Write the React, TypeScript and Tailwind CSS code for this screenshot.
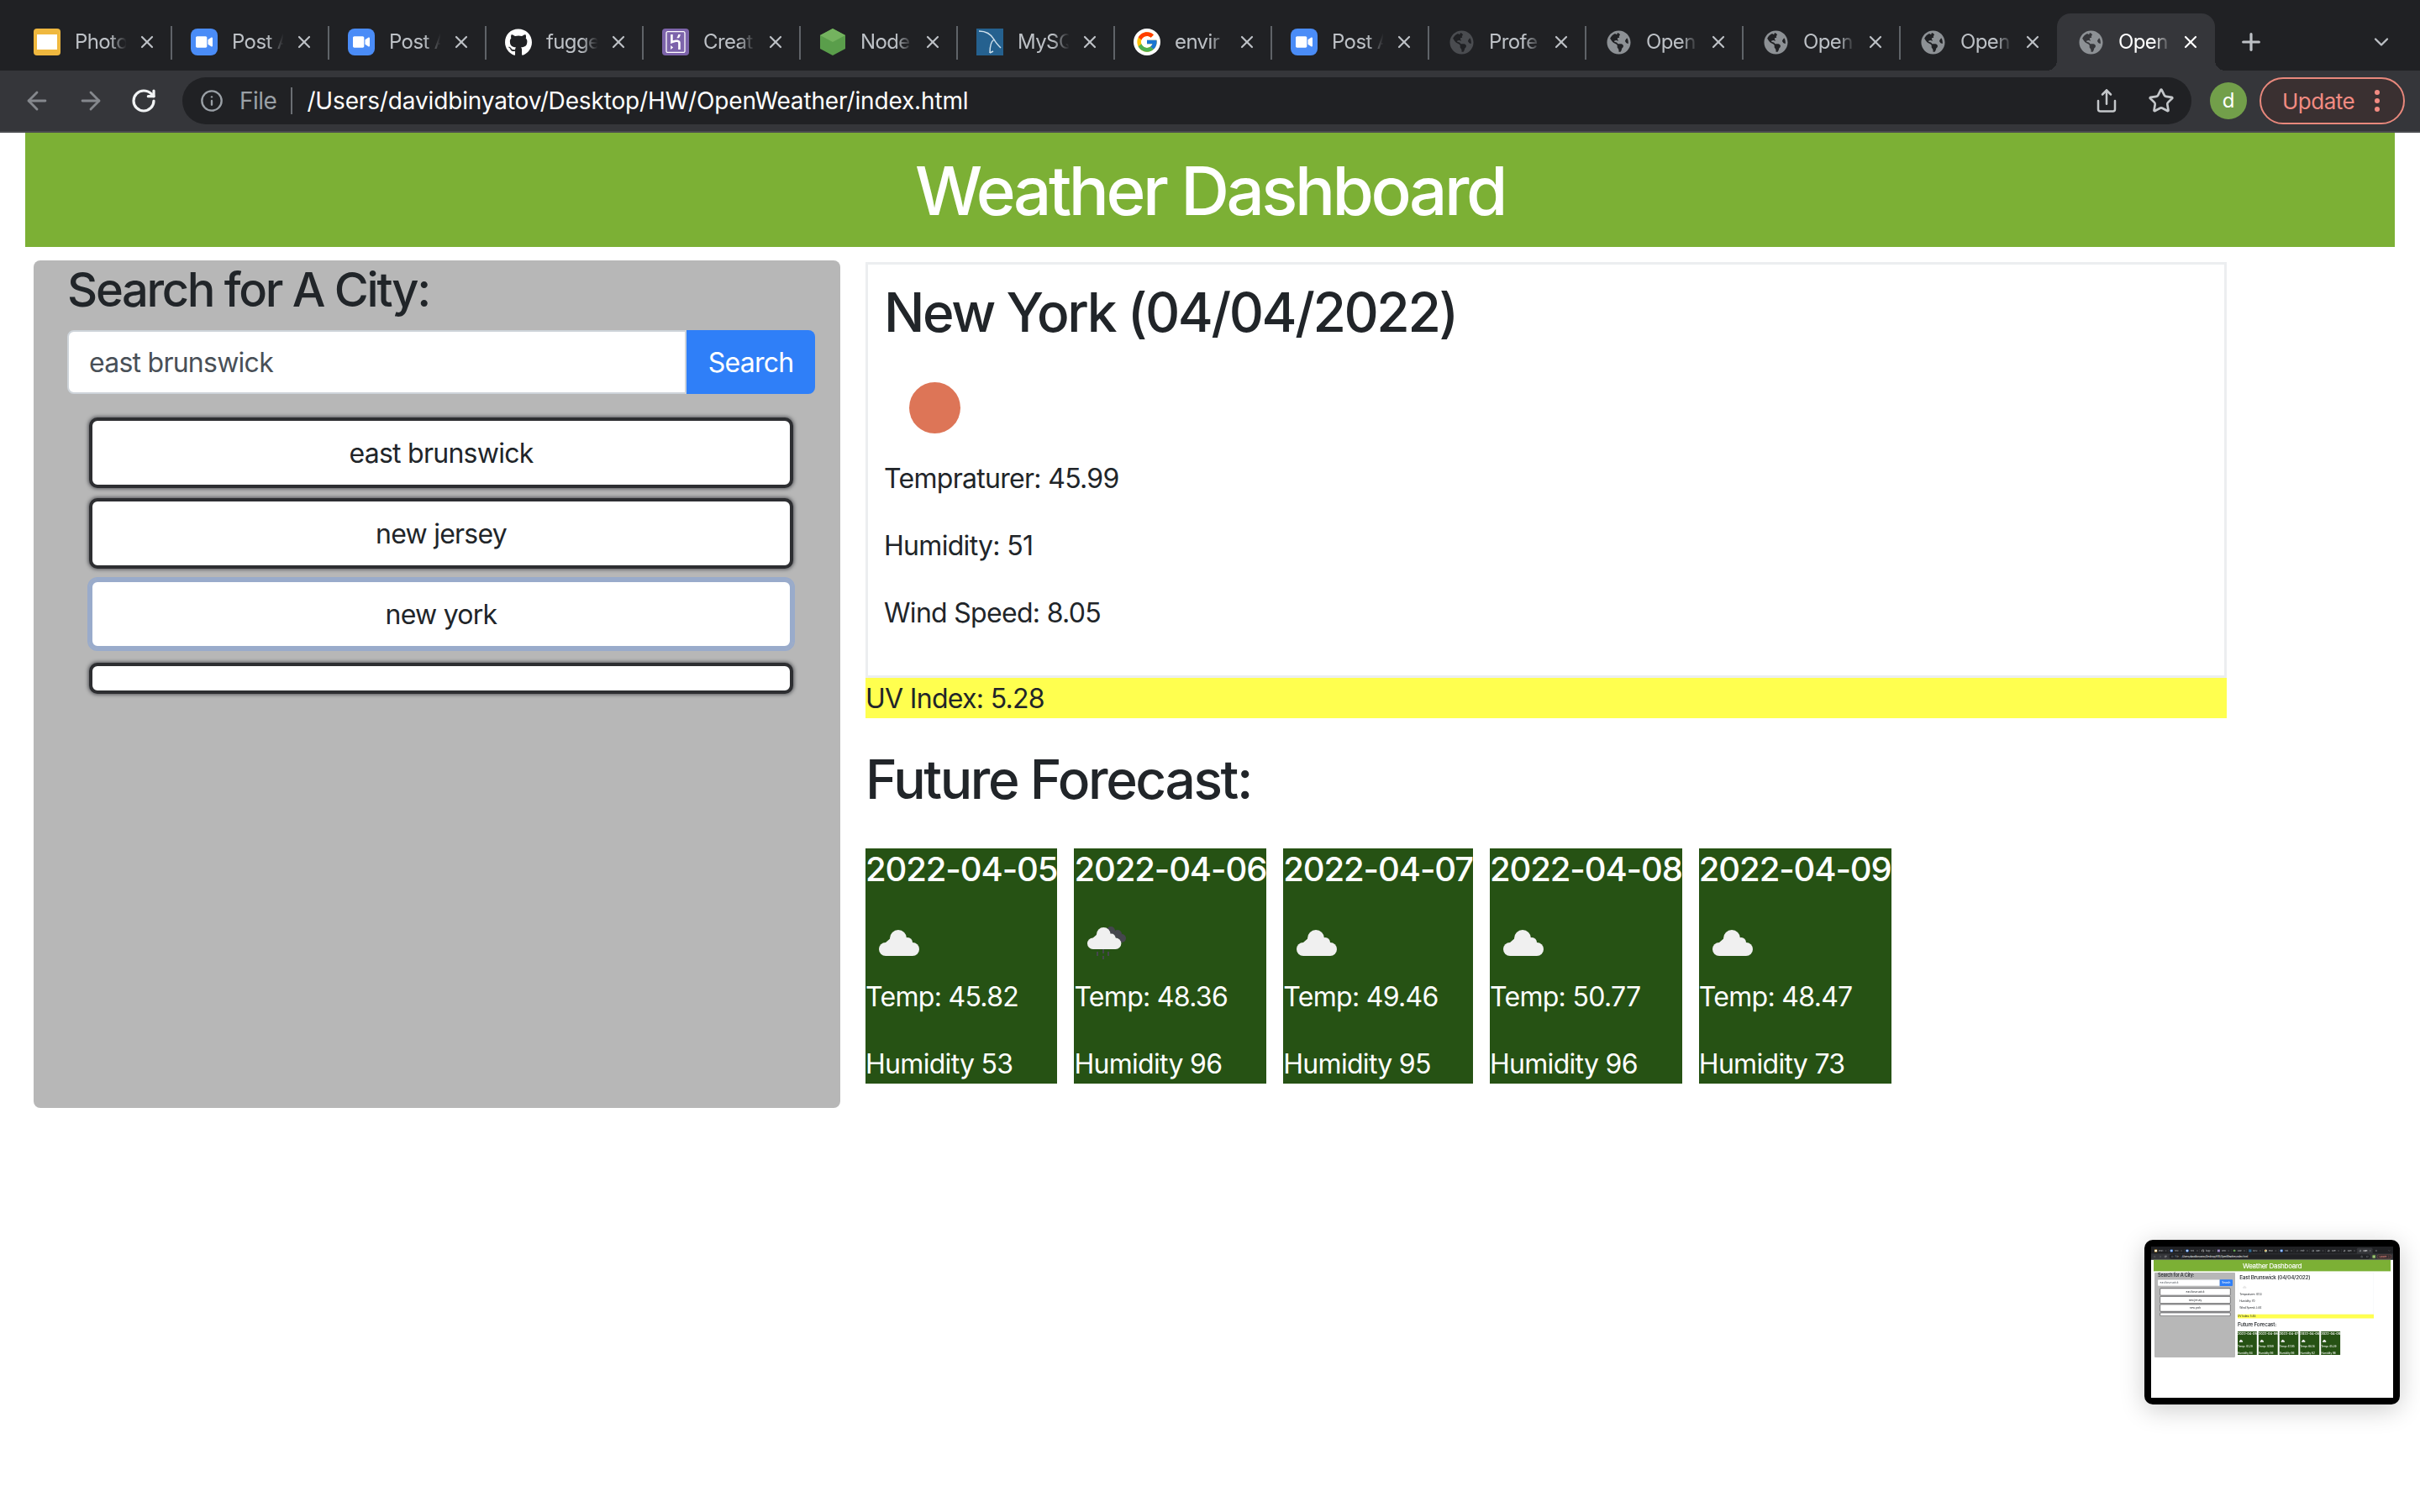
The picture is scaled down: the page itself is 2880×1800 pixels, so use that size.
import { ArrowLeft, ArrowRight, RotateCw, Info, Share, Star, Plus, ChevronDown, X } from "lucide-react";
import { FaGithub, FaGlobeAmericas, FaVideo } from "react-icons/fa";
import { FcGoogle } from "react-icons/fc";
import { SiHeroku } from "react-icons/si";

interface IDay {
  date: string;
  temp: string;
  humidity: string;
  rain?: boolean;
}

interface IWeather {
  city: string;
  temp: string;
  humidity: string;
  wind: string;
  uv: string;
  clear: boolean;
  focused: boolean;
  days: IDay[];
}

const newYork: IWeather = {
  city: "New York (04/04/2022)",
  temp: "45.99",
  humidity: "51",
  wind: "8.05",
  uv: "5.28",
  clear: true,
  focused: true,
  days: [
    { date: "2022-04-05", temp: "45.82", humidity: "53" },
    { date: "2022-04-06", temp: "48.36", humidity: "96", rain: true },
    { date: "2022-04-07", temp: "49.46", humidity: "95" },
    { date: "2022-04-08", temp: "50.77", humidity: "96" },
    { date: "2022-04-09", temp: "48.47", humidity: "73" },
  ],
};

const eastBrunswick: IWeather = {
  city: "East Brunswick (04/04/2022)",
  temp: "41.13",
  humidity: "70",
  wind: "3.44",
  uv: "5.48",
  clear: false,
  focused: false,
  days: [
    { date: "2022-04-05", temp: "41.29", humidity: "68" },
    { date: "2022-04-06", temp: "47.69", humidity: "96" },
    { date: "2022-04-07", temp: "47.95", humidity: "96" },
    { date: "2022-04-08", temp: "68.18", humidity: "62" },
    { date: "2022-04-09", temp: "45.39", humidity: "96" },
  ],
};

function Zoom() {
  return (
    <div className="w-8 h-8 rounded-lg bg-[#4a8cf7] flex items-center justify-center">
      <FaVideo className="text-white" size={20} />
    </div>
  );
}

function Slides() {
  return (
    <div className="w-8 h-8 rounded bg-[#efb83f] flex items-center justify-center">
      <div className="w-6 h-[18px] bg-white" />
    </div>
  );
}

function Globe({ dim }: { dim?: boolean }) {
  return <FaGlobeAmericas size={29} className={dim ? "text-[#4a4c50]" : "text-[#8d9195]"} />;
}

function NodeIcon() {
  return (
    <svg width="30" height="32" viewBox="0 0 30 32">
      <polygon points="15,0 30,8 30,24 15,32 0,24 0,8" fill="#5a9e4b" />
      <polygon points="15,0 30,8 15,16 0,8" fill="#74b35f" />
    </svg>
  );
}

function MysqlIcon() {
  return (
    <div className="w-8 h-8 bg-[#25618f]">
      <svg width="32" height="32" viewBox="0 0 32 32" fill="none" stroke="#cfe0ec" strokeWidth="1.5">
        <path d="M3 3c7 0 14 3 18 10 2 4 5 7 8 10" />
        <path d="M21 13c-3 2-5 7-5 16" />
        <path d="M16 29l4-2" />
      </svg>
    </div>
  );
}

const tabs = [
  { title: "Photo", icon: <Slides /> },
  { title: "Post A", icon: <Zoom /> },
  { title: "Post A", icon: <Zoom /> },
  { title: "fugge", icon: <FaGithub size={33} className="text-white" /> },
  {
    title: "Creat",
    icon: (
      <div className="w-8 h-8 rounded bg-[#7d64ab] flex items-center justify-center">
        <SiHeroku size={26} className="text-white" />
      </div>
    ),
  },
  { title: "Node", icon: <NodeIcon /> },
  { title: "MySQ", icon: <MysqlIcon /> },
  {
    title: "envir",
    icon: (
      <div className="w-8 h-8 rounded-full bg-white flex items-center justify-center">
        <FcGoogle size={28} />
      </div>
    ),
  },
  { title: "Post A", icon: <Zoom /> },
  { title: "Profe", icon: <Globe dim /> },
  { title: "Open", icon: <Globe /> },
  { title: "Open", icon: <Globe /> },
  { title: "Open", icon: <Globe /> },
  { title: "Open", icon: <Globe />, active: true },
];

function Browser() {
  return (
    <div className="bg-[#35363a]">
      <div className="h-[84px] bg-[#202124] pl-[18px] flex items-end">
        {tabs.map((t, i) => (
          <div
            key={i}
            className={
              t.active
                ? "relative w-[188px] h-[68px] -ml-px bg-[#35363a] rounded-t-[16px] flex items-center pl-[24px] text-white"
                : "relative w-[187px] h-[68px] flex items-center pl-[22px] text-[#bdc1c6]"
            }
          >
            <div className="w-8 h-8 flex items-center justify-center shrink-0">{t.icon}</div>
            <div className="ml-[17px] w-[70px] overflow-hidden whitespace-nowrap text-[24px] tracking-[-0.6px] [mask-image:linear-gradient(to_right,black_60%,transparent_88%)]">
              {t.title}
            </div>
            <X size={24} strokeWidth={2.2} className="ml-[4px] shrink-0" />
            {!t.active && i < 12 && (
              <div className="absolute right-0 top-[15px] h-[40px] w-[2px] bg-[#5f6368]" />
            )}
            {t.active && (
              <>
                <div className="absolute -left-3 bottom-0 w-3 h-3 bg-[radial-gradient(circle_at_0_0,transparent_12px,#35363a_12px)]" />
                <div className="absolute -right-3 bottom-0 w-3 h-3 bg-[radial-gradient(circle_at_100%_0,transparent_12px,#35363a_12px)]" />
              </>
            )}
          </div>
        ))}
        <div className="h-[68px] flex items-center ml-[27px]">
          <Plus size={32} strokeWidth={2.4} className="text-[#bdc1c6]" />
        </div>
        <div className="h-[68px] flex items-center ml-[125px]">
          <ChevronDown size={28} className="text-[#bdc1c6]" />
        </div>
      </div>

      <div className="h-[72px] flex items-center border-b-2 border-[#4a4b4f] box-content">
        <ArrowLeft size={34} className="ml-[27px] text-[#85888d]" />
        <ArrowRight size={34} className="ml-[30px] text-[#85888d]" />
        <RotateCw size={32} strokeWidth={2.4} className="ml-[30px] text-[#f1f3f4]" />
        <div className="ml-[30px] w-[2391px] h-[56px] rounded-full bg-[#202124] flex items-center">
          <Info size={28} className="ml-[21px] text-[#9aa0a6]" />
          <span className="ml-[19px] text-[28px] tracking-[-0.5px] text-[#9aa0a6]">File</span>
          <div className="ml-[17px] w-[2px] h-[32px] bg-[#6b6e73]" />
          <span className="ml-[17px] text-[28px] tracking-[-0.15px] text-white">/Users/davidbinyatov/Desktop/HW/OpenWeather/index.html</span>
          <Share size={30} className="ml-auto text-[#c4c7ca]" />
          <Star size={32} className="ml-[34px] mr-[20px] text-[#c4c7ca]" />
        </div>
        <div className="ml-[22px] w-[44px] h-[44px] rounded-full bg-[#729f4a] text-white text-[24px] flex items-center justify-center">
          d
        </div>
        <div className="ml-[15px] w-[173px] h-[56px] rounded-full border-2 border-[#e8887c] bg-[#3a3031] text-[#f28b82] text-[26px] tracking-[-0.5px] flex items-center pl-[25px]">
          Update
          <div className="ml-[24px] flex flex-col gap-[4px]">
            <div className="w-[6px] h-[6px] rounded-full bg-[#f28b82]" />
            <div className="w-[6px] h-[6px] rounded-full bg-[#f28b82]" />
            <div className="w-[6px] h-[6px] rounded-full bg-[#f28b82]" />
          </div>
        </div>
      </div>
    </div>
  );
}

function CloudIcon({ rain, pale }: { rain?: boolean; pale?: boolean }) {
  return (
    <svg width="48" height="40" viewBox="0 0 48 40" className="block">
      {rain && (
        <g fill="#45464d">
          <circle cx="28" cy="5" r="5" />
          <circle cx="36" cy="9" r="5" />
          <circle cx="41" cy="14" r="5" />
          <rect x="18" y="26" width="2" height="6" />
          <rect x="11" y="30" width="2" height="5" />
          <rect x="24" y="30" width="2" height="5" />
          <rect x="18" y="35" width="2" height="4" />
        </g>
      )}
      <g fill={pale ? "#e8e8e8" : "#f0f0f0"} transform={rain ? "translate(0,1) scale(0.84)" : "translate(0,1)"}>
        <circle cx="23" cy="10" r="10" />
        <circle cx="34" cy="15" r="6" />
        <circle cx="8" cy="23" r="8" />
        <circle cx="40" cy="23" r="8" />
        <path d="M8 15 L16 8 L34 15 L40 15 L40 31 L8 31 Z" />
      </g>
    </svg>
  );
}

function CityButton({ label, focused, empty }: { label?: string; focused?: boolean; empty?: boolean }) {
  return (
    <button
      className={
        (focused
          ? "border-4 border-[#99abcb] outline-2 outline-[#99abcb] "
          : "border-4 border-[#2d2e31] shadow-[0_0_4px_1px_#55565a] ") +
        (empty ? "h-[37px] " : "h-[84px] pt-[2px] ") +
        "w-[838px] rounded-[10px] bg-white text-[32px] tracking-[-0.75px] text-[#212529]"
      }
    >
      {label}
    </button>
  );
}

function DayCard({ day }: { day: IDay }) {
  return (
    <div className="h-[280px] bg-[#265214] text-white">
      <div className="text-[40px] leading-[48px] font-medium tracking-[-1.1px] whitespace-nowrap pt-px">{day.date}</div>
      <div className={day.rain ? "pl-[16px] h-[40px] mt-[44px] mb-[20px]" : "pl-[16px] h-[40px] mt-[47px] mb-[17px]"}>
        <CloudIcon rain={day.rain} />
      </div>
      <p className="text-[32px] leading-[48px] tracking-[-0.7px] mb-[32px]">Temp: {day.temp}</p>
      <p className="text-[32px] leading-[48px] tracking-[-0.7px]">Humidity {day.humidity}</p>
    </div>
  );
}

function Dashboard({ data }: { data: IWeather }) {
  return (
    <div className="text-[#212529]">
      <header className="mx-[30px] h-[136px] bg-[#7cb035] flex items-center justify-center">
        <h1 className="text-[80px] font-medium tracking-[-3.5px] text-white pt-[2px]">Weather Dashboard</h1>
      </header>

      <div className="flex pl-[40px] pt-[16px] gap-[30px]">
        <aside className="w-[960px] h-[1009px] bg-[#b7b7b7] rounded-lg pl-[40px]">
          <h3 className="text-[56px] leading-[67px] font-medium tracking-[-2.3px] pt-[2px] h-[67px]">Search for A City:</h3>
          <div className="mt-[16px] w-[890px] h-[76px] flex">
            <div className="flex-1 bg-white border-2 border-[#ced4da] rounded-l-lg flex items-center pl-[24px] pt-[2px] text-[32px] tracking-[-0.75px] text-[#495057]">
              east brunswick
            </div>
            <button className="w-[153px] bg-[#2f7ff8] text-white text-[32px] tracking-[-0.75px] pt-[2px] rounded-r-lg">Search</button>
          </div>
          <div className="mt-[28px] ml-[26px] flex flex-col items-start gap-[12px]">
            <CityButton label="east brunswick" />
            <CityButton label="new jersey" />
            <CityButton label="new york" focused={data.focused} />
            <div className="mt-[4px]">
              <CityButton empty />
            </div>
          </div>
        </aside>

        <main className="w-[1620px] pt-[2px]">
          <div className="h-[495px] border-[3px] border-[#eceef0] px-[19px] pt-[18px]">
            <h2 className="text-[64px] leading-[77px] font-medium tracking-[-2.4px]">{data.city}</h2>
            <div className="w-[122px] h-[100px] mt-[25px] mb-[11px] flex items-center justify-center">
              {data.clear ? <div className="w-[61px] h-[61px] rounded-full bg-[#dd7557] -ml-[2px]" /> : <CloudIcon pale />}
            </div>
            <p className="text-[32px] leading-[48px] tracking-[-0.7px] mb-[32px]">Tempraturer: {data.temp}</p>
            <p className="text-[32px] leading-[48px] tracking-[-0.7px] mb-[32px]">Humidity: {data.humidity}</p>
            <p className="text-[32px] leading-[48px] tracking-[-0.7px]">Wind Speed: {data.wind}</p>
          </div>
          <div className="h-[48px] bg-[#ffff4f] text-[32px] leading-[48px] tracking-[-0.7px] pt-px">UV Index: {data.uv}</div>
          <h2 className="mt-[34px] mb-[44px] text-[64px] leading-[77px] font-medium tracking-[-2.4px]">Future Forecast:</h2>
          <div className="flex gap-[20px]">
            {data.days.map((d) => (
              <DayCard key={d.date} day={d} />
            ))}
          </div>
        </main>
      </div>
    </div>
  );
}

export default function App() {
  return (
    <div className="relative w-[2880px] h-[1800px] overflow-hidden bg-white font-['Inter',sans-serif]">
      <Browser />
      <Dashboard data={newYork} />

      {/* screenshot thumbnail in the corner */}
      <div className="absolute left-[2552px] top-[1476px] w-[304px] h-[196px] rounded-[10px] bg-black p-[8px] shadow-[0_6px_30px_rgba(0,0,0,0.2)]">
        <div className="w-[288px] h-[180px] overflow-hidden bg-white blur-[0.6px]">
          <div className="w-[2880px] h-[1800px] scale-[0.1] origin-top-left">
            <Browser />
            <Dashboard data={eastBrunswick} />
          </div>
        </div>
      </div>
    </div>
  );
}
